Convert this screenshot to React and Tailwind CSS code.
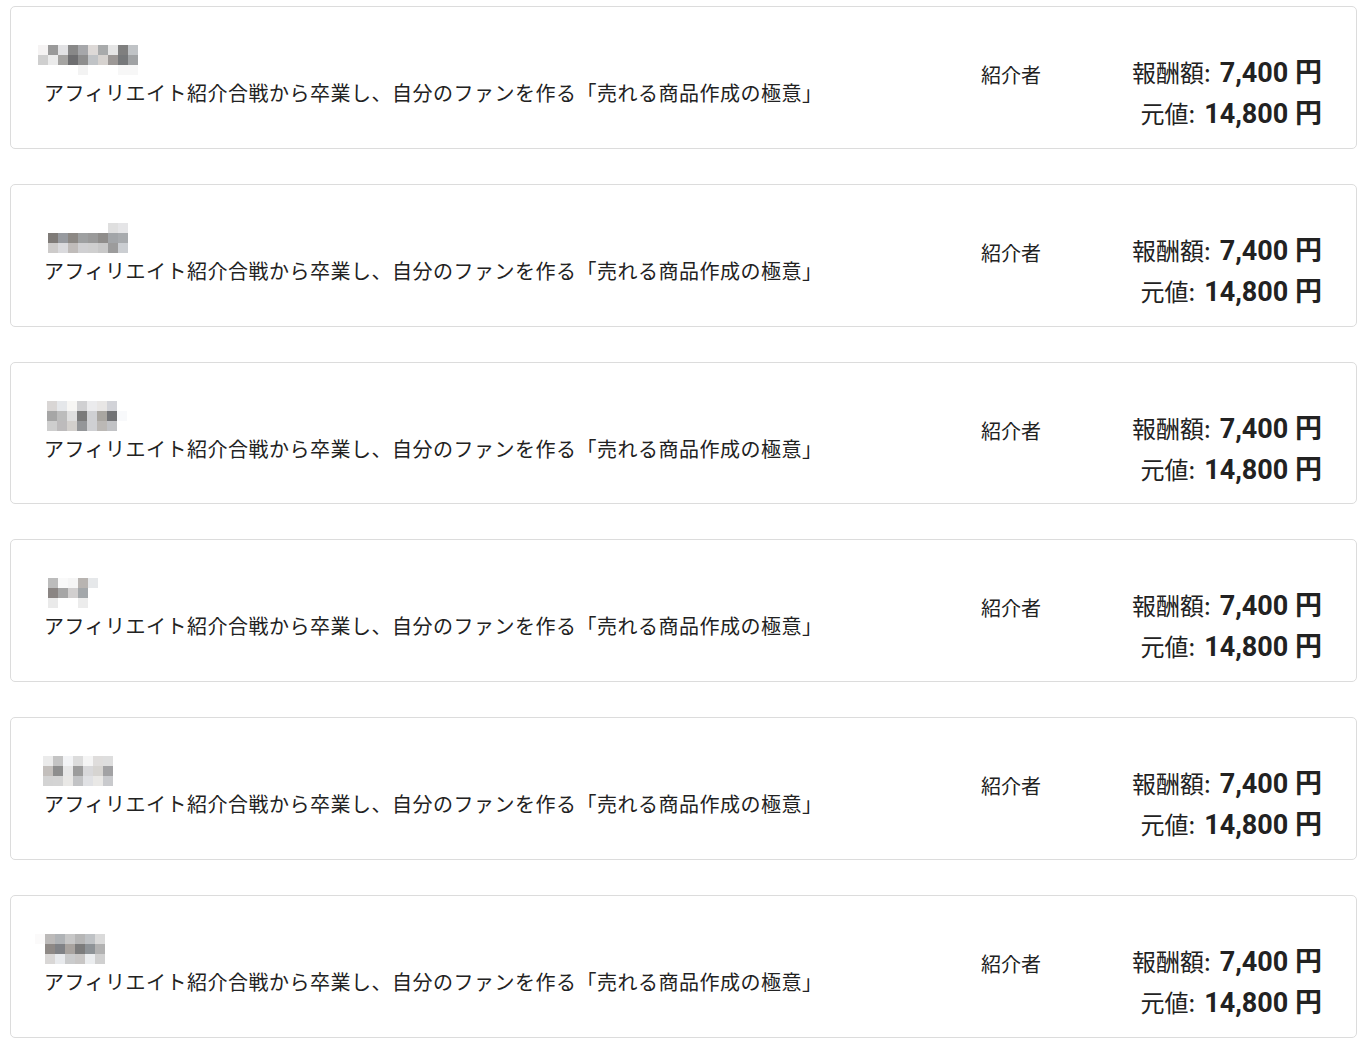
const jp = { fontFamily: '"Noto Sans CJK JP", "Noto Sans", sans-serif' };

const title = 'アフィリエイト紹介合戦から卒業し、自分のファンを作る「売れる商品作成の極意」';

// blurred name thumbnails: rows of cell colours (null = empty), 10px cells
const items = [
  {
    dx: -6,
    rows: [
      ['#f5f3f3', '#9a9a9a', '#e2e2e4', '#888888', '#a6a7aa', '#ddd9d7', '#a8aaab', '#e5e5e5', '#7f7f7f', '#c0c3c6'],
      ['#cfcfcf', '#ebebeb', '#a5a4a2', '#6e6e70', '#8e8e8e', '#c0c3c6', '#d6d2cf', '#9c9896', '#76787a', '#a0a2a4'],
      [null, null, null, null, '#f3f3f3', null, null, null, '#f7f7f7', '#f7f7f7'],
    ],
  },
  {
    dx: 4,
    rows: [
      [null, null, null, null, null, null, '#dfdfdf', '#e5e5e7'],
      ['#7f7b78', '#979a9f', '#8c8884', '#9ea0a1', '#9a9a9a', '#8f8d8b', '#a2a5a8', '#a8abae'],
      ['#cdcbca', '#dadadd', '#c0bcba', '#d0d0d2', '#cfcfcf', '#c8c8c8', '#9c9c9c', '#cbced2'],
    ],
  },
  {
    dx: 3,
    rows: [
      ['#d9d6d5', '#e5e7ea', '#f7f6f4', '#d0d0d2', '#ebebed', '#e8e6e5', '#d2d3d8', null],
      ['#a6a6a6', '#bcbcbc', '#dfdfdf', '#7a7a7a', '#cfd0d3', '#a9a6a1', '#727376', '#f8f9fb'],
      ['#cecece', '#bdbbbc', '#d3d0cd', '#949699', '#cfd0d3', '#bbb8b5', '#c1c2c5', null],
    ],
  },
  {
    dx: 4,
    rows: [
      ['#bcbcbc', '#f9f9f9', '#f5f5f5', '#b8b4b1', '#e6e8ea'],
      ['#8a8583', '#a6a6a6', '#d1cfcf', '#a3a7aa', null],
      ['#eaeaea', null, null, '#ececec', null],
    ],
  },
  {
    dx: -1,
    rows: [
      ['#ebebeb', '#c4c4c4', '#f3f4f6', '#dcdcdc', '#f5f5f5', '#dfdddc', '#dedede'],
      ['#c3bfbc', '#8e8e8e', '#e7e7e7', '#9c9c9c', '#d8d8da', '#d6d4d1', '#a2a2a4'],
      ['#d3d3d3', '#d4d4d4', '#e9e8e6', '#c2c3c5', '#e0e1e4', '#e9e8e6', '#c9cacd'],
    ],
  },
  {
    dx: -9,
    rows: [
      ['#fbfafa', '#bcbab9', '#b0b3b6', '#c7c7c7', '#b6b6b6', '#bfc2c5', '#dadada'],
      [null, '#8e8986', '#808286', '#a8a39f', '#7c7c7c', '#8e9397', '#b2b2b2'],
      [null, '#d9d7d6', '#e8eaed', '#cacbcc', '#c8c6c5', '#ebedef', '#d0d0d0'],
    ],
  },
];

function Mosaic({ rows, dx }) {
  return (
    <div className="flex flex-col h-[30px]" style={{ marginLeft: dx }}>
      {rows.map((row, i) => (
        <div key={i} className="flex h-[10px]">
          {row.map((c, j) => (
            <div key={j} className="w-[10px] h-[10px]" style={{ backgroundColor: c || 'transparent' }} />
          ))}
        </div>
      ))}
    </div>
  );
}

function ReferralCard({ item }) {
  return (
    <div className="h-[142.8px] border border-[#dcdcdc] rounded-[5px] bg-white flex items-start pl-[33px] pr-[34px] text-[#222222]">
      <div className="flex-1 pt-[38px]">
        <Mosaic rows={item.rows} dx={item.dx} />
        <p className="mt-[4px] text-[20px] leading-[28px] tracking-[0.5px] whitespace-nowrap" style={jp}>
          {title}
        </p>
      </div>
      <div className="w-[111px] mt-[54px] text-[20px] leading-[28px]" style={jp}>
        紹介者
      </div>
      <div className="w-[230px] mt-[44px] flex flex-col items-end">
        <div className="flex items-baseline leading-[41px] h-[41px]">
          <span className="text-[24px]" style={jp}>報酬額:</span>
          <span className="ml-[9px] text-[27px] font-bold font-['Roboto','Noto_Sans_CJK_JP',sans-serif]">7,400 円</span>
        </div>
        <div className="flex items-baseline leading-[41px] h-[41px]">
          <span className="text-[24px]" style={jp}>元値:</span>
          <span className="ml-[9px] text-[27px] font-bold font-['Roboto','Noto_Sans_CJK_JP',sans-serif]">14,800 円</span>
        </div>
      </div>
    </div>
  );
}

export default function App() {
  return (
    <div className="min-h-screen bg-white pt-[6px]">
      <div className="ml-[10px] w-[1347px] flex flex-col gap-[35px]">
        {items.map((item, i) => (
          <ReferralCard key={i} item={item} />
        ))}
      </div>
    </div>
  );
}
